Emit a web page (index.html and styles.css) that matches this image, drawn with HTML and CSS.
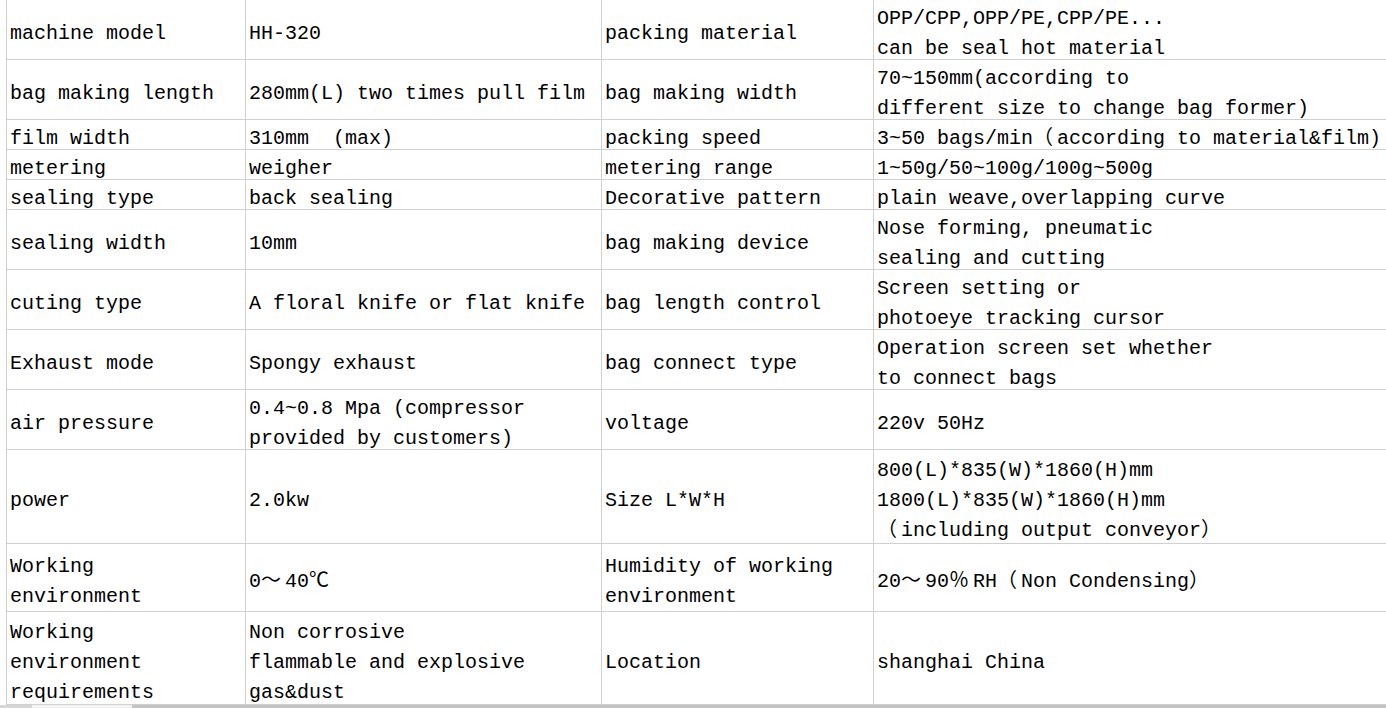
FILE: index.html
```html
<!DOCTYPE html>
<html>
<head>
<meta charset="utf-8">
<title>Machine specification</title>
<link rel="stylesheet" href="styles.css">
</head>
<body>
<div class="sheet">
  <div class="c"><span class="t">machine model</span></div>
  <div class="c"><span class="t">HH-320</span></div>
  <div class="c"><span class="t">packing material</span></div>
  <div class="c"><span class="t">OPP/CPP,OPP/PE,CPP/PE...<br>can be seal hot material</span></div>

  <div class="c"><span class="t">bag making length</span></div>
  <div class="c"><span class="t">280mm(L) two times pull film</span></div>
  <div class="c"><span class="t">bag making width</span></div>
  <div class="c"><span class="t">70~150mm(according to<br>different size to change bag former)</span></div>

  <div class="c"><span class="t">film width</span></div>
  <div class="c"><span class="t">310mm&nbsp; (max)</span></div>
  <div class="c"><span class="t">packing speed</span></div>
  <div class="c"><span class="t">3~50 bags/min<span class="fw">（</span>according to material&amp;film)</span></div>

  <div class="c"><span class="t">metering</span></div>
  <div class="c"><span class="t">weigher</span></div>
  <div class="c"><span class="t">metering range</span></div>
  <div class="c"><span class="t">1~50g/50~100g/100g~500g</span></div>

  <div class="c"><span class="t">sealing type</span></div>
  <div class="c"><span class="t">back sealing</span></div>
  <div class="c"><span class="t">Decorative pattern</span></div>
  <div class="c"><span class="t">plain weave,overlapping curve</span></div>

  <div class="c"><span class="t">sealing width</span></div>
  <div class="c"><span class="t">10mm</span></div>
  <div class="c"><span class="t">bag making device</span></div>
  <div class="c"><span class="t">Nose forming, pneumatic<br>sealing and cutting</span></div>

  <div class="c"><span class="t">cuting type</span></div>
  <div class="c"><span class="t">A floral knife or flat knife</span></div>
  <div class="c"><span class="t">bag length control</span></div>
  <div class="c"><span class="t">Screen setting or<br>photoeye tracking cursor</span></div>

  <div class="c"><span class="t">Exhaust mode</span></div>
  <div class="c"><span class="t">Spongy exhaust</span></div>
  <div class="c"><span class="t">bag connect type</span></div>
  <div class="c"><span class="t">Operation screen set whether<br>to connect bags</span></div>

  <div class="c"><span class="t">air pressure</span></div>
  <div class="c"><span class="t">0.4~0.8 Mpa (compressor<br>provided by customers)</span></div>
  <div class="c"><span class="t">voltage</span></div>
  <div class="c"><span class="t">220v 50Hz</span></div>

  <div class="c"><span class="t">power</span></div>
  <div class="c"><span class="t">2.0kw</span></div>
  <div class="c"><span class="t">Size L*W*H</span></div>
  <div class="c"><span class="t">800(L)*835(W)*1860(H)mm<br>1800(L)*835(W)*1860(H)mm<br><span class="fw">（</span>including output conveyor<span class="fw">）</span></span></div>

  <div class="c"><span class="t">Working<br>environment</span></div>
  <div class="c"><span class="t">0<span class="fw">～</span>40<span class="fw">℃</span></span></div>
  <div class="c"><span class="t">Humidity of working<br>environment</span></div>
  <div class="c"><span class="t">20<span class="fw">～</span>90<span class="fw">％</span>RH<span class="fw">（</span>Non Condensing<span class="fw">）</span></span></div>

  <div class="c"><span class="t">Working<br>environment<br>requirements</span></div>
  <div class="c"><span class="t">Non corrosive<br>flammable and explosive<br>gas&amp;dust</span></div>
  <div class="c"><span class="t">Location</span></div>
  <div class="c"><span class="t">shanghai China</span></div>
</div>
<div class="hscroll">
  <div class="hs-left"></div>
  <div class="hs-thumb"></div>
  <div class="hs-track"></div>
</div>
</body>
</html>
```

FILE: styles.css
```css
html, body {
  margin: 0;
  padding: 0;
  background: #ffffff;
  overflow: hidden;
}

body {
  width: 1386px;
  height: 708px;
  font-family: "Liberation Mono", "Noto Sans CJK SC", monospace;
  font-size: 20px;
  color: #000000;
}

.sheet {
  display: grid;
  grid-template-columns: 239px 356px 272px 540px;
  grid-template-rows: 60px 60px 30px 30px 30px 60px 60px 60px 60px 94px 68px 93px;
  margin-left: 6px;
  border-left: 1px solid #d0d0d0;
  width: 1407px;
}

.c {
  box-sizing: border-box;
  display: flex;
  align-items: center;
  padding-left: 3px;
  padding-top: 9px;
  border-right: 1px solid #d0d0d0;
  border-bottom: 1px solid #d0d0d0;
  white-space: nowrap;
  overflow: hidden;
}

.t {
  display: block;
  line-height: 30px;
}

.fw {
  letter-spacing: 4px;
}

.hscroll {
  display: flex;
  height: 3px;
  background: #c3c3c3;
}

.hs-left {
  width: 32px;
  background: #d6d6d6;
}

.hs-thumb {
  width: 100px;
  background: #f2f2f2;
}

.hs-track {
  flex: 1;
}
```
